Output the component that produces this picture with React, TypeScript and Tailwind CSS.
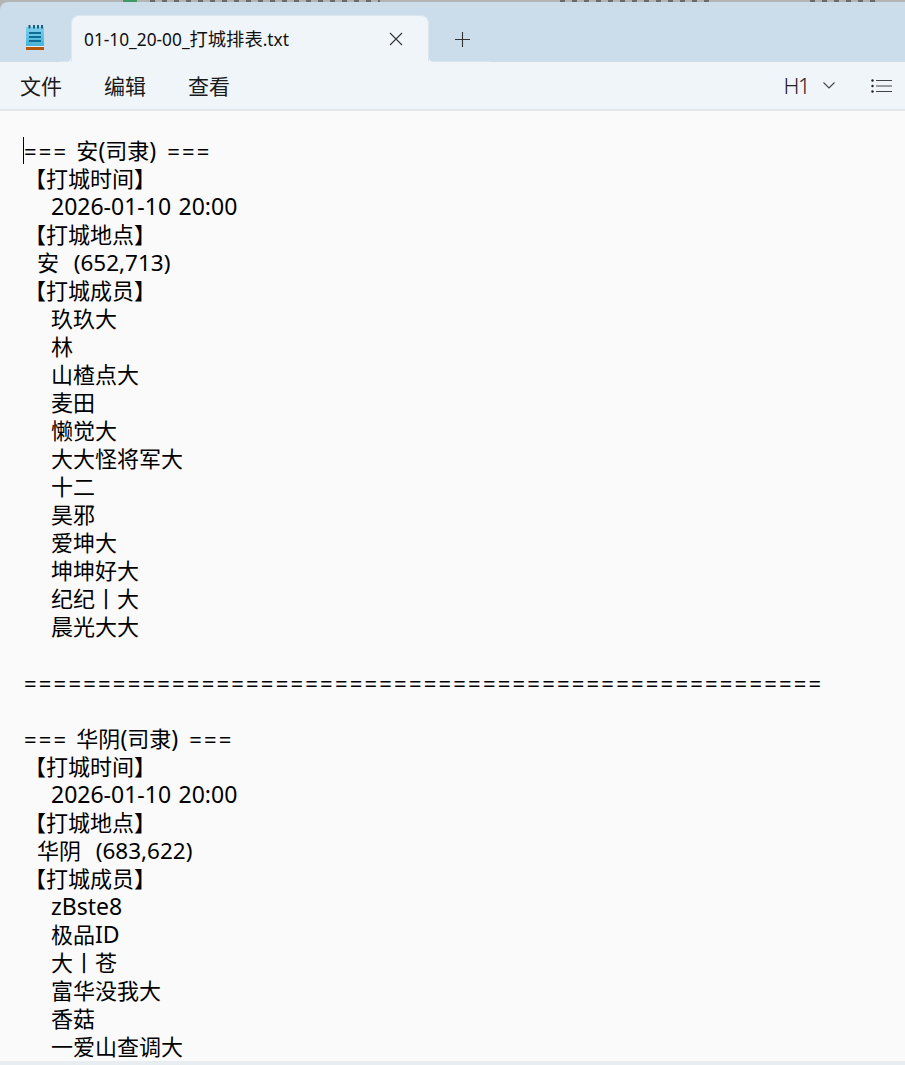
const fontStack = "font-['Noto_Sans','Noto_Sans_CJK_SC',sans-serif]";

type Line = { text: string; indent?: 'date' | 'place' };

const members1 = ['玖玖大', '林', '山楂点大', '麦田', '懒觉大', '大大怪将军大', '十二', '昊邪', '爱坤大', '坤坤好大', '纪纪丨大', '晨光大大'];
const members2 = ['zBste8', '极品ID', '大丨苍', '富华没我大', '香菇', '一爱山查调大'];

const block = (title: string, place: string, members: string[]): Line[] => [
  { text: title },
  { text: '【打城时间】' },
  { text: '2026-01-10 20:00', indent: 'date' },
  { text: '【打城地点】' },
  { text: place, indent: 'place' },
  { text: '【打城成员】' },
  ...members.map((m) => ({ text: m, indent: 'date' as const })),
];

const lines: Line[] = [
  ...block('=== 安(司隶) ===', '安  (652,713)', members1),
  { text: ' ' },
  { text: '='.repeat(54) },
  { text: ' ' },
  ...block('=== 华阴(司隶) ===', '华阴  (683,622)', members2),
];

// latin runs come out narrower than the original font, so they get their own size
const latinClass = (part: string) => {
  if (part.endsWith(') ')) return 'text-[23px] [word-spacing:5px]';
  if (part.includes(',')) return 'text-[22.500px] [word-spacing:1.500px]';
  return 'text-[23px] [word-spacing:1.500px]';
};

const LineText = ({ text }: { text: string }) => (
  <>
    {text.split(/(=+ ?|[\x20-\x3c\x3e-\x7e]+)/).filter(Boolean).map((part, i) =>
      /^=+ ?$/.test(part) ? (
        <span key={i} className="relative top-[1px] tracking-[2.220px]">{part}</span>
      ) : /^[\x20-\x7e]+$/.test(part) ? (
        <span key={i} className={latinClass(part)}>{part}</span>
      ) : (
        <span key={i}>{part}</span>
      )
    )}
  </>
);

const NotepadIcon = () => (
  <svg width="18" height="25" viewBox="0 0 18 25">
    <defs>
      <linearGradient id="pad" x1="0" y1="0" x2="0" y2="1">
        <stop offset="0" stopColor="#7fd0ec" />
        <stop offset="1" stopColor="#45b4d8" />
      </linearGradient>
    </defs>
    <rect x="0" y="2" width="18" height="19" fill="url(#pad)" />
    <rect x="0" y="21" width="18" height="1" fill="#e8eef2" />
    <rect x="0" y="22" width="18" height="3" fill="#b5560f" />
    <g fill="#14607f">
      <rect x="2.500" y="0" width="2" height="3.500" />
      <rect x="7" y="0" width="2" height="3.500" />
      <rect x="11" y="0" width="2" height="3.500" />
      <rect x="15" y="0" width="2" height="3.500" />
    </g>
    <g fill="#0f6d96">
      <rect x="3" y="7" width="12" height="2" />
      <rect x="3" y="11" width="12" height="2" />
      <rect x="3" y="15" width="12" height="2" />
    </g>
  </svg>
);

export default function App() {
  return (
    <div className={`${fontStack} w-[905px] h-[1065px] overflow-hidden flex flex-col bg-[#b4b4b4] text-black`}>
      {/* bits of the window behind, only their lower edge shows */}
      <svg className="block shrink-0" width="905" height="2" viewBox="0 0 905 2">
        <rect x="123" y="0" width="14" height="2" fill="#3f9a63" />
        <g stroke="#6a6a6a" strokeWidth="2" strokeDasharray="5 7">
          <path d="M150 1h230M560 1h150M810 1h70" />
        </g>
      </svg>
      {/* Tab strip */}
      <div className="h-[60px] flex items-end pl-[71px] relative bg-[#cbdcea] rounded-tl-[8px]">
        <div className="absolute left-[26px] top-[23px]">
          <NotepadIcon />
        </div>
        <div className="absolute left-[59px] bottom-0 w-[431px] h-px bg-[#d8e4ee]" />
        <svg className="absolute left-[66px] bottom-0" width="5" height="5" viewBox="0 0 5 5" fill="#f0f5fa">
          <path d="M5 0Q5 5 0 5H5Z" />
        </svg>
        <svg className="absolute left-[429px] bottom-0" width="5" height="5" viewBox="0 0 5 5" fill="#f0f5fa">
          <path d="M0 0Q0 5 5 5H0Z" />
        </svg>
        <div className="relative w-[358px] h-[47px] bg-[#f0f5fa] rounded-t-[8px] border border-b-0 border-[#dbe6ef] flex items-center pl-[12px] pr-[25px] text-[18.300px] text-[#111]">
          <span className="flex-1">
            <span className="text-[17.300px]">01-10_20-00_</span>打城排表<span className="text-[17.300px]">.txt</span>
          </span>
          <svg className="mb-[1px]" width="14" height="14" viewBox="0 0 14 14" stroke="#333" strokeWidth="1.1" fill="none">
            <path d="M1 1l12 12M13 1L1 13" />
          </svg>
        </div>
        <svg className="ml-[26px] mb-[15px]" width="15" height="15" viewBox="0 0 15 15" stroke="#333" strokeWidth="1.1" fill="none">
          <path d="M7.500 0v15M0 7.500h15" />
        </svg>
      </div>
      {/* Menu bar */}
      <div className="h-[49px] bg-[#f0f5fa] border-b-2 border-[#e1e6ea] flex items-center pl-[20px] pr-[13px] text-[21px] text-[#1a1a1a]">
        <div className="flex gap-[42px] pt-[2px]">
          <span>文件</span>
          <span>编辑</span>
          <span>查看</span>
        </div>
        <span className="ml-auto text-[22px] font-light tracking-[-1.500px] text-[#222]">H1</span>
        <svg className="ml-[14px]" width="12" height="7" viewBox="0 0 12 7" stroke="#444" strokeWidth="1.1" fill="none">
          <path d="M0.500 0.500l5.500 5.500 5.500-5.500" />
        </svg>
        <svg className="ml-[36px]" width="21" height="14" viewBox="0 0 21 14" stroke="#444" strokeWidth="1.2" fill="#222">
          <circle cx="1.500" cy="1.500" r="1.200" stroke="none" />
          <circle cx="1.500" cy="7" r="1.200" stroke="none" />
          <circle cx="1.500" cy="12.500" r="1.200" stroke="none" />
          <path d="M5 1.500h16M5 7h16M5 12.500h16" />
        </svg>
      </div>
      {/* Editor */}
      <div className="flex-1 bg-[#fafafa] overflow-hidden relative pt-[25px] pl-[24px]">
        <div className="absolute left-[23px] top-[26px] w-px h-[27px] bg-black" />
        {lines.map((line, i) => (
          <div
            key={i}
            className={`h-[28px] leading-[28px] text-[22px] whitespace-pre ${
              line.indent === 'date' ? 'pl-[27px]' : line.indent === 'place' ? 'pl-[13px]' : ''
            }`}
          >
            <LineText text={line.text} />
          </div>
        ))}
      </div>
      <div className="h-[4px] bg-[#e8edf2]" />
    </div>
  );
}
